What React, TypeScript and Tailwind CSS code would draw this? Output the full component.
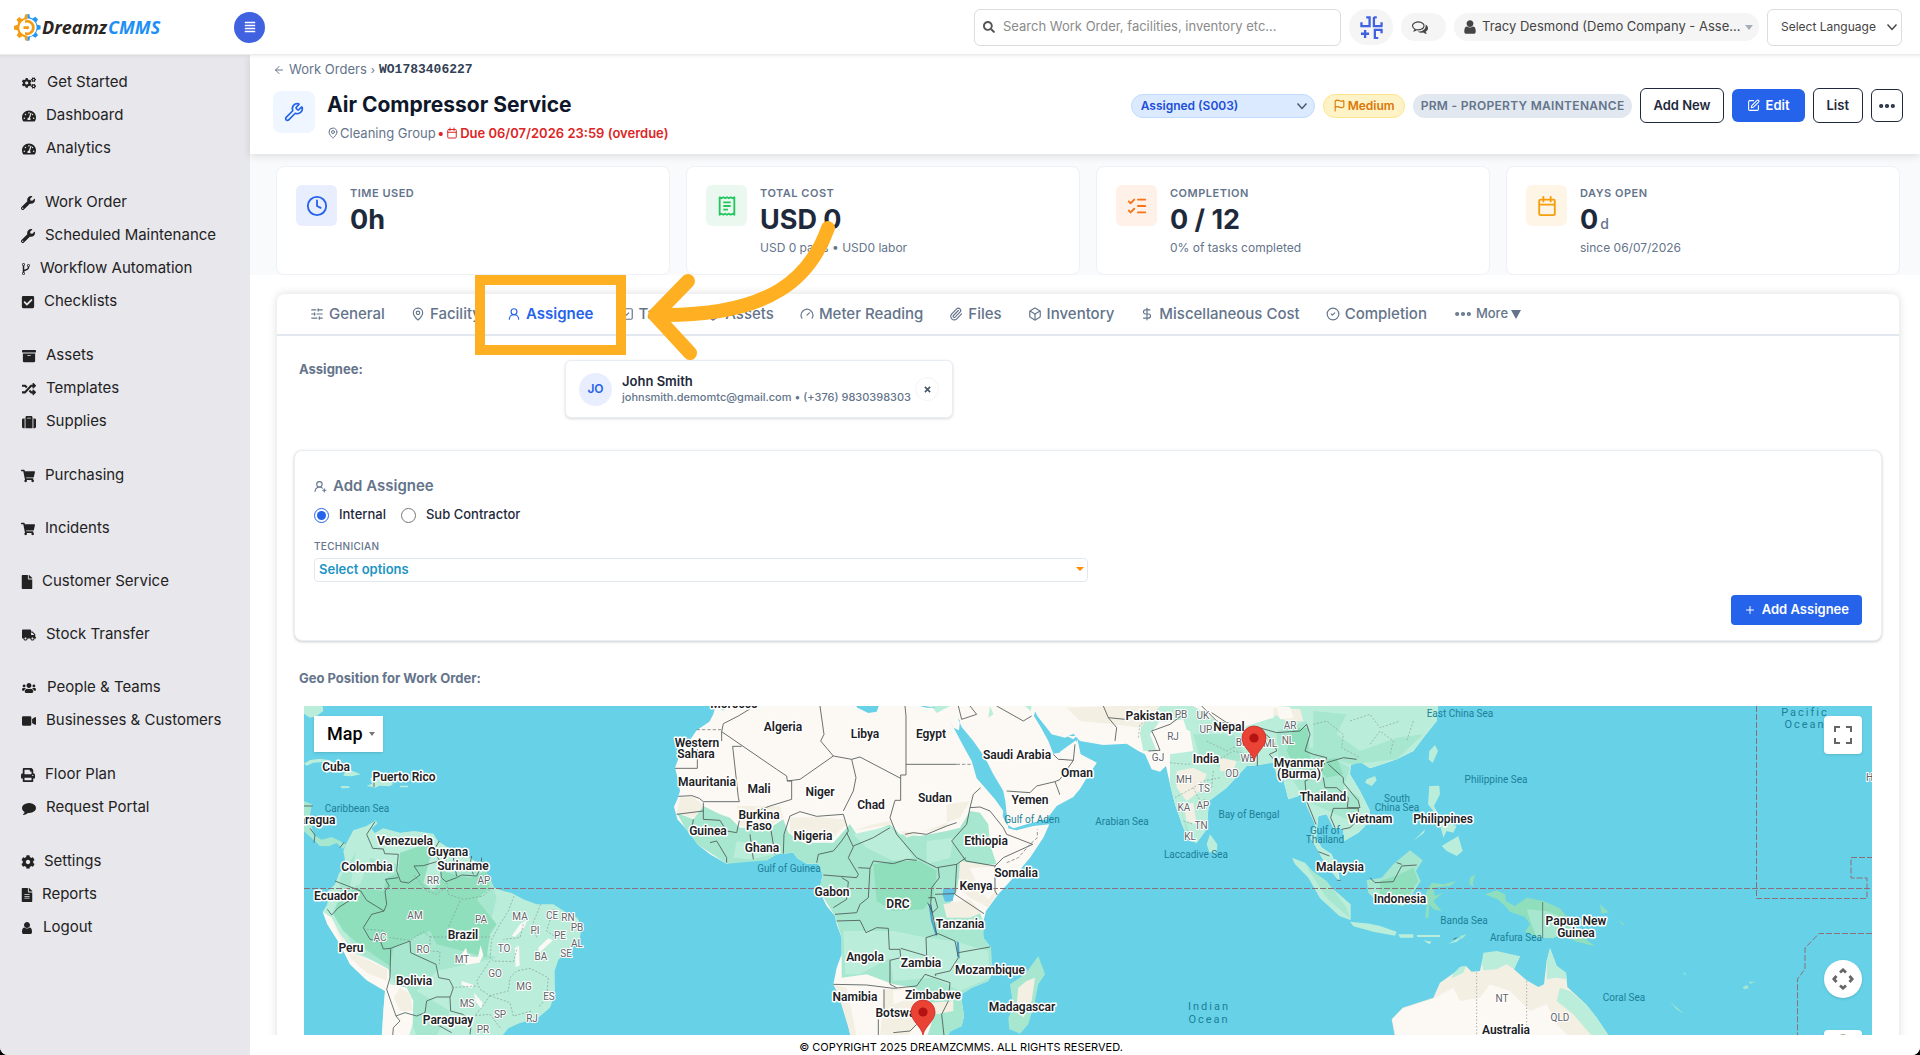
import { useState } from "react";
import type { ComponentType } from "react";
import {
    FaAlignJustify, FaArchive, FaCheckSquare, FaCog, FaCogs, FaFile, FaFileAlt, FaPrint, FaRandom,
    FaSearch, FaShoppingCart, FaSuitcase, FaTachometerAlt, FaTruck, FaUsers, FaVideo, FaWrench,
} from "react-icons/fa";
import {
    ArrowLeft, Box, CircleCheck, Clock, DollarSign, Ellipsis, Flag, Gauge, ListChecks, MapPin,
    Paperclip, Plus, SlidersHorizontal, SquareCheck, SquarePen, UserRound, UserRoundPlus, Wrench,
} from "lucide-react";

/* ---------- glyphs that the icon sets do not carry ---------- */

function Glyph({ d, className }: { d: string; className?: string }) {
    return (
        <svg viewBox="0 0 1792 1792" fill="currentColor" className={className} aria-hidden="true">
            <path d={d} />
        </svg>
    );
}

const userPath =
    "M1536 1399q0 109-62.5 187t-150.5 78h-854q-88 0-150.5-78t-62.5-187q0-85 8.5-160.5t31.5-152 58.5-131 94-89 134.5-34.5q131 128 313 128t313-128q76 0 134.5 34.5t94 89 58.5 131 31.5 152 8.5 160.5zm-256-887q0 159-112.5 271.5t-271.5 112.5-271.5-112.5-112.5-271.5 112.5-271.5 271.5-112.5 271.5 112.5 112.5 271.5z";
const forkPath =
    "M672 1472q0-40-28-68t-68-28-68 28-28 68 28 68 68 28 68-28 28-68zm0-1152q0-40-28-68t-68-28-68 28-28 68 28 68 68 28 68-28 28-68zm640 128q0-40-28-68t-68-28-68 28-28 68 28 68 68 28 68-28 28-68zm96 0q0 52-26 96.5t-70 69.5q-2 287-226 414-67 38-203 81-128 40-169.5 71t-41.5 100v26q44 25 70 69.5t26 96.5q0 80-56 136t-136 56-136-56-56-136q0-52 26-96.5t70-69.5v-820q-44-25-70-69.5t-26-96.5q0-80 56-136t136-56 136 56 56 136q0 52-26 96.5t-70 69.5v497q54-26 154-57 55-17 87.5-29.5t70.5-31 59-39.5 40.5-51 28-69.5 8.5-91.5q-44-25-70-69.5t-26-96.5q0-80 56-136t136-56 136 56 56 136z";
const commentPath =
    "M1792 896q0 174-120 321.5t-326 233-450 85.5q-70 0-145-8-198 175-460 242-49 14-114 22-17 2-30.5-9t-17.5-29v-1q-3-4-.5-12t2-10 4.5-9.5l6-9 7-8.5 8-9q7-8 31-34.5t34.5-38 31-39.5 32.5-51 27-59 26-76q-157-89-247.5-220t-90.5-281q0-130 71-248.5t191-204.5 286-136.5 348-50.5q244 0 450 85.5t326 233 120 321.5z";
const commentsPath =
    "M704 384q-153 0-286 52t-211.5 141-78.5 191q0 82 53 158t149 132l97 56-35 84q34-20 62-39l44-31 53 10q78 14 153 14 153 0 286-52t211.5-141 78.5-191-78.5-191-211.5-141-286-52zm0-128q191 0 353.5 68.5t256.5 186.5 94 257-94 257-256.5 186.5-353.5 68.5q-86 0-176-16-124 88-278 128-36 9-86 16h-3q-11 0-20.5-8t-11.5-21q-1-3-1-6.5t.5-6.5 2-6l2.5-5 3.5-5.5 4-5 4.5-5 4-4.5q5-6 23-25t26-29.5 22.5-29 25-38.5 20.5-44q-124-72-195-177t-71-224q0-139 94-257t256.5-186.5 353.5-68.5zm822 1169q10 24 20.5 44t25 38.5 22.5 29 26 29.5 23 25q1 1 4 4.5t4.5 5 4 5 3.5 5.5l2.5 5 2 6 .5 6.5-1 6.5q-3 14-13 22t-22 7q-50-7-86-16-154-40-278-128-90 16-176 16-271 0-472-132 58 4 88 4 161 0 309-45t264-129q125-92 192-212t67-254q0-77-23-152 129 71 204 178t75 230q0 120-71 224.5t-195 176.5z";

type IconProps = { className?: string };

const UserGlyph = ({ className }: IconProps) => <Glyph d={userPath} className={className} />;
const ForkGlyph = ({ className }: IconProps) => <Glyph d={forkPath} className={className} />;
const CommentGlyph = ({ className }: IconProps) => <Glyph d={commentPath} className={className} />;

function CalendarIcon({ className }: IconProps) {
    return (
        <svg viewBox="0 0 24 24" fill="none" stroke="currentColor" strokeWidth="2" strokeLinecap="round" strokeLinejoin="round" className={className} aria-hidden="true">
            <path d="M5 5h14a1.500 1.500 0 0 1 1.500 1.500v14A1.500 1.500 0 0 1 19 22H5a1.500 1.500 0 0 1-1.500-1.500v-14A1.500 1.500 0 0 1 5 5zM8 2v5M16 2v5M3.500 10.500h17" />
        </svg>
    );
}

function ReceiptIcon({ className }: IconProps) {
    return (
        <svg viewBox="0 0 24 24" fill="none" stroke="currentColor" strokeWidth="2" strokeLinejoin="round" className={className} aria-hidden="true">
            <path d="M4 2.500l2 1 2-1 2 1 2-1 2 1 2-1 2 1 2-1v19l-2-1-2 1-2-1-2 1-2-1-2 1-2-1-2 1zM8 8h8M8 12h8M8 16h5" />
        </svg>
    );
}

function Chevron({ className }: IconProps) {
    return (
        <svg viewBox="0 0 12 12" fill="none" stroke="currentColor" strokeWidth="1.4" className={className} aria-hidden="true">
            <path d="M1.5 3.5 6 8.5l4.5-5" />
        </svg>
    );
}

function Logo() {
    return (
        <a href="#home" className="flex items-center gap-px font-['Open_Sans'] text-lg leading-6 font-bold text-[#2b2623] italic">
            <svg viewBox="0 0 27 27" className="size-[27px]" aria-hidden="true">
                <path d="M13.5 0v5.2a8.3 8.3 0 0 0 0 16.6V27l-2.2-.6-.6-3.2-2.6-1-2.8 1.8-2.6-2.6 1.7-2.8-1-2.4L0 15.4v-3.7l3.3-.7 1-2.5-1.8-2.8 2.6-2.6 2.8 1.8 2.5-1 .7-3.3z" fill="#f39c12" />
                <path d="M13.5 0l1.8.2.7 3.4 2.6 1 2.7-1.8L24 5.4l-1.8 2.8 1 2.5 3.4.7v3.8l-3.3.7-1.1 2.6 1.8 2.7-2.6 2.6-2.8-1.8-2.5 1-.7 3.4-1.9.6v-4.3a9.2 9.2 0 0 0 0-18.4z" fill="#2196f3" />
                <path d="M11 6.2a7.6 7.6 0 1 1 0 14.6v-2.7a5 5 0 1 0 0-9.2z" fill="#f39c12" />
                <path d="M9.5 12.3h3.2a1.6 1.6 0 1 1 0 2.8H9.5z" fill="#f39c12" />
            </svg>
            <span>Dreamz</span>
            <span className="text-[#1e90f5]">CMMS</span>
        </a>
    );
}

/* ---------- top bar ---------- */

function TopBar() {
    return (
        <header className="relative z-20 flex h-[55px] shrink-0 items-center border-b border-[#ececec] bg-white pr-[18px] pl-[14px] shadow-[0_1px_3px_rgba(0,0,0,0.08)]">
            <div className="flex w-[220px] items-center">
                <Logo />
            </div>
            <button type="button" aria-label="Toggle menu" className="flex size-[31px] items-center justify-center rounded-full bg-[#4162e0] text-white">
                <FaAlignJustify className="size-3" />
            </button>

            <div className="ml-auto flex items-center gap-2">
                <label className="flex h-[37px] w-[367px] items-center gap-2 rounded-md border border-[#dcdcdc] px-2">
                    <FaSearch className="size-3 text-[#555]" />
                    <input
                        type="search"
                        aria-label="Search"
                        placeholder="Search Work Order, facilities, inventory etc..."
                        className="min-w-0 flex-1 text-[13px] outline-none placeholder:text-[#8b8b8b]"
                    />
                </label>
                <button type="button" aria-label="Quick actions" className="flex h-9 w-11 items-center justify-center rounded-full bg-[#f5f5f5]">
                    <svg viewBox="0 0 24 24" className="size-[23px]" fill="none" stroke="#4162e0" strokeWidth="2.400" aria-hidden="true">
                        <path d="M1.500 6.500v4H10V1.500H6.500M14.500 1v9.500H23.500M17.500 1.500h-3M22.500 10.500v-4M1 18.500h8.500M5.300 14.500V23M22.500 18v-3.500h-7v8.500H19" />
                    </svg>
                </button>
                <button type="button" aria-label="Messages" className="flex h-7 w-[45px] items-center justify-center rounded-full bg-[#f5f5f5] pr-2 text-[#444]">
                    <Glyph d={commentsPath} className="size-4" />
                </button>
                <button type="button" className="flex h-7 w-[305px] items-center gap-1 rounded-full bg-[#f5f5f5] px-2 text-[13px] whitespace-nowrap text-[#444]">
                    <UserGlyph className="size-4 shrink-0" />
                    Tracy Desmond (Demo Company - Asse...
                    <span className="ml-auto border-x-4 border-t-[5px] border-x-transparent border-t-[#a5adba]" />
                </button>
                <div className="relative">
                    <select aria-label="Select Language" className="h-[37px] w-[135px] appearance-none rounded-md border border-[#dcdcdc] bg-white pl-[13px] text-xs text-[#444]">
                        <option>Select Language</option>
                    </select>
                    <Chevron className="pointer-events-none absolute top-3 right-1 size-3 text-[#444]" />
                </div>
            </div>
        </header>
    );
}

/* ---------- sidebar ---------- */

type Icon = ComponentType<IconProps>;

const menu: { label: string; icon: Icon; size: string }[][] = [
    [
        { label: "Get Started", icon: FaCogs, size: "w-4" },
        { label: "Dashboard", icon: FaTachometerAlt, size: "w-[15px]" },
        { label: "Analytics", icon: FaTachometerAlt, size: "w-[15px]" },
    ],
    [
        { label: "Work Order", icon: FaWrench, size: "w-[14px]" },
        { label: "Scheduled Maintenance", icon: FaWrench, size: "w-[14px]" },
        { label: "Workflow Automation", icon: ForkGlyph, size: "w-[9px]" },
        { label: "Checklists", icon: FaCheckSquare, size: "w-[13px]" },
    ],
    [
        { label: "Assets", icon: FaArchive, size: "w-[15px]" },
        { label: "Templates", icon: FaRandom, size: "w-[15px]" },
        { label: "Supplies", icon: FaSuitcase, size: "w-[15px]" },
    ],
    [{ label: "Purchasing", icon: FaShoppingCart, size: "w-[14px]" }],
    [{ label: "Incidents", icon: FaShoppingCart, size: "w-[14px]" }],
    [{ label: "Customer Service", icon: FaFile, size: "w-[11px]" }],
    [{ label: "Stock Transfer", icon: FaTruck, size: "w-[15px]" }],
    [
        { label: "People & Teams", icon: FaUsers, size: "w-4" },
        { label: "Businesses & Customers", icon: FaVideo, size: "w-[15px]" },
    ],
    [
        { label: "Floor Plan", icon: FaPrint, size: "w-[14px]" },
        { label: "Request Portal", icon: CommentGlyph, size: "w-[15px]" },
    ],
    [
        { label: "Settings", icon: FaCog, size: "w-[13px]" },
        { label: "Reports", icon: FaFileAlt, size: "w-[11px]" },
        { label: "Logout", icon: UserGlyph, size: "w-[12px]" },
    ],
];

function Sidebar() {
    return (
        <nav className="flex w-[250px] shrink-0 flex-col gap-5 overflow-hidden bg-[#e8e7ec] pt-[11px] pl-[21px]">
            {menu.map((group) => (
                <ul key={group[0].label} className={group.length > 1 ? "pb-px" : ""}>
                    {group.map(({ label, icon: ItemIcon, size }) => (
                        <li key={label}>
                            <a href="#menu" className="flex h-[33px] items-center gap-[10px] text-[15px] text-[#222]">
                                <span className={`flex justify-center ${size}`}>
                                    <ItemIcon className="h-[14px] w-auto shrink-0" />
                                </span>
                                {label}
                            </a>
                        </li>
                    ))}
                </ul>
            ))}
        </nav>
    );
}

/* ---------- work order header ---------- */

function OrderHeader() {
    return (
        <section className="relative z-10 flex h-[99px] shrink-0 flex-col bg-white pr-[17px] pl-[23px] shadow-[0_2px_8px_rgba(0,0,0,0.12)]">
            <div className="flex h-[30px] items-center gap-1 text-[13px] text-[#64748b]">
                <a href="#orders" className="flex items-center gap-1">
                    <ArrowLeft className="size-3" />
                    Work Orders
                </a>
                <span className="text-[11px]">›</span>
                <span className="font-['Liberation_Mono'] font-bold text-[#334155]">WO1783406227</span>
            </div>
            <div className="flex items-start">
                <div className="mt-[6px] mr-3 flex size-[42px] items-center justify-center rounded-lg bg-[#eff6ff] text-[#2563eb]">
                    <Wrench className="size-5" />
                </div>
                <div>
                    <h1 className="text-[21px] leading-10 font-bold text-[#0f172a]">Air Compressor Service</h1>
                    <p className="flex items-center gap-px text-[13px] leading-4 text-[#64748b]">
                        <MapPin className="size-3" />
                        Cleaning Group
                        <span className="flex items-center gap-[2px] pl-px font-semibold text-[#dc2626]">
                            • <CalendarIcon className="size-3" />
                            Due 06/07/2026 23:59 (overdue)
                        </span>
                    </p>
                </div>
                <div className="mt-[3px] ml-auto flex items-center gap-2 text-[13px] font-semibold">
                    <div className="relative">
                        <select aria-label="Status" className="block h-6 w-[184px] appearance-none rounded-full border border-[#bfdbfe] bg-[#dbeafe] pl-[9px] text-xs font-semibold text-[#1d4ed8]">
                            <option>Assigned (S003)</option>
                        </select>
                        <Chevron className="pointer-events-none absolute top-[6px] right-[7px] size-3 text-[#475569]" />
                    </div>
                    <span className="flex h-6 items-center gap-[2px] rounded-full border border-[#fde68a] bg-[#fef3c7] px-[9px] text-xs text-[#d97706]">
                        <Flag className="size-[13px]" />
                        Medium
                    </span>
                    <span className="flex h-6 items-center rounded-full bg-[#e2e8f0] px-2 text-xs tracking-[0.3px] text-[#64748b]">
                        PRM - PROPERTY MAINTENANCE
                    </span>
                    <button type="button" className="h-[35px] rounded-md border border-[#1e293b] px-3 text-[#1e293b]">Add New</button>
                    <button type="button" className="flex h-[33px] items-center gap-[6px] rounded-md bg-[#2563eb] px-[15px] text-white">
                        <SquarePen className="size-[13px]" />
                        Edit
                    </button>
                    <button type="button" className="h-[35px] rounded-md border border-[#1e293b] px-[13px] text-[#1e293b]">List</button>
                    <button type="button" aria-label="More actions" className="flex h-[33px] w-8 items-center justify-center rounded-md border border-[#1e293b] text-[#1e293b]">
                        <Ellipsis className="size-5" strokeWidth={3} />
                    </button>
                </div>
            </div>
        </section>
    );
}

/* ---------- stat cards ---------- */

const stats = [
    { label: "TIME USED", value: "0h", note: "", icon: Clock, tone: "bg-[#e8eefd] text-[#2563eb]" },
    { label: "TOTAL COST", value: "USD 0", note: "USD 0 parts • USD0 labor", icon: ReceiptIcon, tone: "bg-[#eaf8ef] text-[#22c55e]" },
    { label: "COMPLETION", value: "0 / 12", note: "0% of tasks completed", icon: ListChecks, tone: "bg-[#fff1e7] text-[#f97316]" },
    { label: "DAYS OPEN", value: "0", unit: "d", note: "since 06/07/2026", icon: CalendarIcon, tone: "bg-[#fef5e6] text-[#f59e0b]" },
];

function Stats() {
    return (
        <section className="grid grid-cols-4 gap-4 bg-[#f8fafc] pt-3 pr-5 pl-[26px]">
            {stats.map(({ label, value, unit, note, icon: StatIcon, tone }) => (
                <div key={label} className="flex h-[109px] gap-[13px] rounded-lg border border-[#eef2f6] bg-white px-[19px] py-[18px]">
                    <div className={`flex size-[41px] shrink-0 items-center justify-center rounded-md ${tone}`}>
                        <StatIcon className="size-[22px]" />
                    </div>
                    <div className="text-xs text-[#64748b]">
                        <div className="text-[11px] leading-4 font-semibold tracking-[0.5px]">{label}</div>
                        <div className="flex items-baseline gap-[2px] text-[27px] leading-[38px] font-bold text-[#1e293b]">
                            {value}
                            {unit && <span className="text-sm font-medium text-[#64748b]">{unit}</span>}
                        </div>
                        <div className="leading-[18px]">{note}</div>
                    </div>
                </div>
            ))}
        </section>
    );
}

/* ---------- tabs ---------- */

const tabs = [
    { label: "General", icon: SlidersHorizontal },
    { label: "Facility", icon: MapPin },
    { label: "Assignee", icon: UserRound },
    { label: "Tasks", icon: SquareCheck },
    { label: "Assets", icon: Box },
    { label: "Meter Reading", icon: Gauge },
    { label: "Files", icon: Paperclip },
    { label: "Inventory", icon: Box },
    { label: "Miscellaneous Cost", icon: DollarSign },
    { label: "Completion", icon: CircleCheck },
];

function Callout() {
    return (
        <span className="pointer-events-none absolute -top-7 -left-8 z-30 block h-20 w-[151px] border-[10px] border-[#ffb022]">
            <svg viewBox="0 0 200 160" fill="none" stroke="#ffb022" strokeWidth="14" strokeLinecap="round" strokeLinejoin="round" className="absolute -top-[75px] left-[150px] h-40 w-[200px] max-w-none" aria-hidden="true">
                <path d="M193 18C176 66 138 106 26 105" />
                <path d="M53 71 20 105l35 38" />
            </svg>
        </span>
    );
}

function Tabs() {
    const [active, setActive] = useState("Assignee");
    return (
        <div role="tablist" className="flex h-[42px] items-center gap-[26px] border-b-2 border-[#e2e8f0] pl-[33px] text-[15px] font-medium text-[#64748b]">
            {tabs.map(({ label, icon: TabIcon }) => (
                <button
                    key={label}
                    type="button"
                    role="tab"
                    aria-selected={active === label}
                    onClick={() => setActive(label)}
                    className={`relative flex items-center gap-[5px] whitespace-nowrap ${active === label ? "font-semibold text-[#2563eb]" : ""}`}
                >
                    <TabIcon className="size-[14px]" />
                    {label}
                    {label === "Assignee" && <Callout />}
                </button>
            ))}
            <button type="button" className="flex items-center gap-[3px] text-[13px]">
                <Ellipsis className="size-5" strokeWidth={3} />
                More
                <span className="border-x-[5px] border-t-[9px] border-x-transparent border-t-[#64748b]" />
            </button>
        </div>
    );
}

/* ---------- map ---------- */

type Mark = [string, number, number];

const countries: Mark[] = [
    ["Cuba", 32, 61], ["Puerto Rico", 100, 71], ["Nicaragua", 4, 114], ["Venezuela", 101, 135], ["Guyana", 144, 146],
    ["Suriname", 159, 160], ["Colombia", 63, 161], ["Ecuador", 32, 190], ["Peru", 47, 242], ["Brazil", 159, 229],
    ["Bolivia", 110, 275], ["Paraguay", 144, 314], ["Morocco", 430, -2], ["Algeria", 479, 21], ["Libya", 561, 28],
    ["Egypt", 627, 28], ["Saudi Arabia", 713, 49], ["Western", 393, 37], ["Sahara", 392, 48], ["Mauritania", 403, 76],
    ["Mali", 455, 83], ["Niger", 516, 86], ["Chad", 567, 99], ["Sudan", 631, 92], ["Yemen", 726, 94],
    ["Oman", 773, 67], ["Burkina", 455, 109], ["Faso", 455, 120], ["Guinea", 404, 125], ["Ghana", 458, 142],
    ["Nigeria", 509, 130], ["Ethiopia", 682, 135], ["Somalia", 712, 167], ["Kenya", 672, 180], ["Gabon", 528, 186],
    ["DRC", 594, 198], ["Tanzania", 656, 218], ["Angola", 561, 251], ["Zambia", 617, 257], ["Mozambique", 686, 264],
    ["Zimbabwe", 629, 289], ["Namibia", 551, 291], ["Botswana", 598, 307], ["Madagascar", 718, 301],
    ["Pakistan", 845, 10], ["Nepal", 925, 21], ["India", 902, 53], ["Myanmar", 995, 57], ["(Burma)", 995, 68],
    ["Thailand", 1019, 91], ["Vietnam", 1066, 113], ["Philippines", 1139, 113], ["Malaysia", 1036, 161],
    ["Indonesia", 1096, 193], ["Papua New", 1272, 215], ["Guinea", 1272, 227], ["Australia", 1202, 324],
];

const states: Mark[] = [
    ["RR", 129, 174], ["AP", 180, 174], ["AM", 111, 209], ["PA", 177, 213], ["MA", 216, 210], ["CE", 248, 209],
    ["RN", 264, 211], ["PB", 273, 221], ["PE", 256, 229], ["PI", 231, 224], ["AL", 273, 237], ["SE", 262, 247],
    ["BA", 237, 250], ["TO", 200, 242], ["AC", 76, 231], ["RO", 119, 243], ["MT", 158, 253], ["GO", 191, 267],
    ["MG", 220, 280], ["ES", 245, 290], ["MS", 163, 297], ["SP", 196, 308], ["RJ", 228, 312], ["PR", 179, 323],
    ["PB", 877, 8], ["UK", 899, 9], ["AR", 986, 19], ["RJ", 869, 30], ["UP", 902, 23], ["NL", 984, 34],
    ["ML", 966, 37], ["BR", 938, 36], ["WB", 944, 52], ["GJ", 854, 51], ["OD", 928, 67], ["MH", 880, 73],
    ["TS", 900, 82], ["KA", 880, 101], ["AP", 899, 99], ["TN", 897, 119], ["KL", 886, 130], ["NT", 1198, 292],
    ["QLD", 1256, 311], ["HI", 1567, 71],
];

const seas: Mark[] = [
    ["Caribbean Sea", 53, 102], ["Gulf of Guinea", 485, 162], ["Gulf of Aden", 728, 113], ["East China Sea", 1156, 7],
    ["Arabian Sea", 818, 115], ["Bay of Bengal", 945, 108], ["South", 1093, 92], ["China Sea", 1093, 101],
    ["Gulf of", 1021, 124], ["Thailand", 1021, 133], ["Laccadive Sea", 892, 148], ["Banda Sea", 1160, 214],
    ["Philippine Sea", 1192, 73], ["Arafura Sea", 1212, 231], ["Coral Sea", 1320, 291],
];

const oceans: Mark[] = [["Indian", 905, 300], ["Ocean", 905, 313], ["Pacific", 1501, 6], ["Ocean", 1501, 18]];

function Labels({ items, className }: { items: Mark[]; className: string }) {
    return (
        <g className={className} textAnchor="middle" dominantBaseline="central" paintOrder="stroke" strokeLinejoin="round">
            {items.map(([text, x, y]) => (
                <text key={`${text}${x}`} x={x} y={y}>{text}</text>
            ))}
        </g>
    );
}

function Pin({ x, y }: { x: number; y: number }) {
    return (
        <g transform={`translate(${x} ${y})`}>
            <path d="M0 0C-2-9-12-14-12-23a12 12 0 0 1 24 0C12-14 2-9 0 0z" fill="#ea4335" stroke="#c5221f" strokeWidth="0.7" />
            <circle cy="-23" r="4.600" fill="#b31412" />
        </g>
    );
}

const cream = "#fcf9f5";
const sand = "#f4efe3";
const mint = "#bbeddb";
const green = "#a7e7cf";
const deep = "#8fdfbd";
const water = "#66d1e7";

/* each group below is drawn on its own sheet at three units to the pixel */
function WorldMap() {
    return (
        <svg viewBox="0 0 1568 329" preserveAspectRatio="xMidYMin slice" className="block h-[329px] w-full" aria-label="World map">
            <rect width="1568" height="329" fill={water} />

            {/* the Americas */}
            <g transform="translate(-14 -15) scale(0.33333)">
                <path fill={mint} d="M30 40H97L100 60 80 75 60 80 30 60z" />
                <path fill={mint} d="M42 218 60 207 90 203 120 208 150 228 175 235 212 250 185 256 160 254 165 243 130 228 100 213 70 215 50 224zM240 262 258 257 285 266 310 278 300 286 268 284 256 290 230 284 246 278zM152 285l25 1 2 5-24 1zM330 284h24v5h-24z" />
                <path fill={green} d="M30 325 66 340 60 370 66 410 72 432 95 446 125 438 150 450 170 462 158 474 140 456 116 466 90 465 72 448 50 428 30 410z" />
                <path fill={mint} d="M170 455 190 418 230 405 258 388 262 398 244 412 254 426 280 412 330 425 372 420 400 424 430 428 444 450 490 480 540 500 580 530 600 560 612 590 640 600 665 606 700 625 740 640 790 640 830 665 862 680 875 705 870 740 832 782 805 806 794 840 795 910 780 950 740 984 690 996 655 1012 632 1040H275L280 960 285 900 230 868 180 820 150 760 112 700 98 662 112 640 114 600 135 580 148 545 168 524 160 480z" />
                <path fill={green} d="M150 560 200 480 240 500 320 520 420 500 560 520 600 560 620 620 600 700 520 760 620 800 440 840 380 900 480 960 440 1033H380L300 840 200 780 130 660 150 610z" />
                <path fill={deep} d="M330 485 420 455 450 500 450 540 540 560 590 540 600 590 560 625 620 700 600 730 590 800 520 780 440 760 420 720 360 745 310 770 300 825 220 770 160 720 130 670 150 620 200 590 280 600 290 560 325 545z" />
                <path fill={mint} d="M420 500 450 490 455 560 430 600 400 575zM200 470 250 480 210 580 180 590z" />
                <path fill={cream} d="M98 662 125 680 150 730 200 790 250 810 296 835 300 880 350 890 370 930 368 1000 355 1040H275L280 960 285 900 230 868 180 820 150 760 112 700z" />
                <path fill={sand} d="M125 690 150 730 190 785 250 815 292 835 290 870 230 845 180 800zM330 890 362 910 368 960 330 960 312 920z" />
                <path fill={cream} d="M508 800l20-30 6 26 30 2 8-35 8 30-12 22-40 6zM675 770l12-6 2 60-12 4zM745 770l30-28 14 6-22 20-20 18zM690 700l22-14-8 22-30 30-8-4zM552 905l26 30-4 20-18-26zM515 870l36 12-6 10-30-10z" />
                <path fill="none" stroke="#4b5d5a" strokeWidth="2.500" d="M255 392 230 430 248 472 280 474 284 488 325 490 320 540 332 572 356 576 390 552 372 525 400 524 440 512 470 505M448 450 430 480 450 510 454 560 468 572 500 560 515 552 560 555 572 530 575 500M490 500 500 556M545 495 540 520 550 550M325 560 286 565 298 585 285 600 290 640 282 660 230 628 212 600 135 570M282 660 245 670 220 710 240 745 272 752 280 774 302 772 360 750 362 785 438 820 446 860 478 866 490 890 480 920 482 960 518 970M302 772 300 860 290 895 318 975 345 965 380 975 405 965 410 930 440 918 480 918M318 975 330 990 310 1010 308 1035M112 655 125 672 145 650 200 615M42 345h26M60 412 75 432 72 455M150 470l12-16M252 258v30M518 970 545 990 540 1030M440 1000 485 1025" />
                <path fill="none" stroke="#7e9c95" strokeWidth="2" strokeDasharray="6 5" d="M372 552 410 600 440 610 465 590M470 575 475 610 520 625 580 615 605 590M510 630 475 710 490 735M420 738H600M672 615 655 660 630 700 605 745 600 800 610 810 670 812 682 770M752 640 728 700 740 740M790 655 770 720 800 740M230 715 280 718 300 740 360 748 400 722 420 738V780L450 782 448 820M600 810 560 870 570 895 600 914 655 900 660 860 680 840 720 832 775 860 770 920 745 950M600 914 575 950 545 985M600 914 660 935 670 975 725 960M485 890 560 885M545 975 600 970 630 1010M700 700 690 740 640 745" />
            </g>

            {/* Africa and Arabia */}
            <g transform="translate(356 -15) scale(0.33333)">
                <path fill={cream} d="M168 40 160 70 148 92 110 118 88 150 62 185 45 230 55 270 60 300 52 325 42 347 52 385 75 410 100 440 112 460 150 490 200 518 225 510 270 505 320 508 350 490 400 485 412 502 440 518 475 518 488 550 478 600 500 645 525 675 530 700 545 740 545 790 530 830 520 880 535 910 560 980 572 1040H858L872 1020 905 1005 912 975 905 930 900 912 935 890 985 870 995 850 993 770 970 740 968 700 978 660 1015 610 1060 560 1110 500 1150 440 1168 400 1120 405 1070 418 1045 412 1060 412 1100 400 1160 385 1190 345 1240 318 1262 290 1280 260 1310 215 1262 190 1252 145 1242 180 1215 182 1180 188 1165 150 1142 108 1122 75 1130 40z" />
                <path fill={green} d="M50 365 100 385 130 345 180 370 210 380 240 410 330 410 370 385 385 425 430 455 520 455 570 400 590 430 640 420 690 400 720 430 780 435 860 420 900 410 930 360 960 365 985 400 990 460 1010 520 930 525 905 510 890 600 870 640 900 650 960 665 972 700 970 740 993 770 995 850 985 870 935 890 900 912 905 930 912 975 905 1005 872 1020 858 1040H800L820 980 760 890 700 880 620 850 545 860 545 790 545 740 525 675 478 600 488 550 475 518 440 518 412 502 400 485 350 490 320 508 200 518 112 460 75 410z" />
                <path fill={mint} d="M230 450 330 470 350 490 270 505 220 500zM580 430 690 405 720 440 760 500 700 510 620 470zM800 450 880 440 870 500 800 520zM700 720 800 740 880 750 985 780 990 860 900 900 860 880 820 860 700 870 690 800 600 850 555 850 550 720 620 720z" />
                <path fill={deep} d="M640 520 700 510 780 510 830 540 820 620 790 655 700 660 650 630z" />
                <path fill={sand} d="M60 320 100 318 130 345 100 380 50 365zM230 345 360 345 370 380 320 410 240 405zM390 380 470 378 550 385 560 400 500 455 440 440 390 425zM575 420 640 400 690 390 720 420 780 425 860 410 860 340 930 330 900 380 740 440 700 400zM850 640 930 625 965 665 930 680 860 680zM900 510 1000 525 1010 610 985 650 930 620 895 590zM672 895 760 890 800 960 740 1040H660zM520 880 560 890 590 1033H572L535 910zM810 935 880 930 880 960 830 970z" />
                <path fill={cream} d="M930 530 1000 528 1015 590 985 625 960 600zM700 900 740 895 730 930 700 940z" />
                <path fill={mint} d="M810 40 880 40 830 66zM165 45 200 45 190 60zM990 45 1000 70 985 80zM1095 45h20l-3 15z" />
                <path fill={water} d="M585 40 592 50 625 66 650 62 658 40zM758 40 830 50 800 50zM862 78 880 110 897 118 900 90 893 80 905 108 940 150 975 200 1000 250 1030 300 1036 330 1040 370 1045 412 1070 418 1040 400 1028 375 1030 360 1005 325 975 290 950 262 935 210 910 165 885 118z" />
                <path fill="#63c3e6" d="M850 592 885 590 882 610 878 630 855 632 848 612z" />
                <path fill="#4ba5cb" d="M806 640h8l5 50 14 42-6 2-14-44zM890 750l7 5 2 48-7-8z" />
                <path fill={green} d="M1135 795 1148 830 1155 850 1135 880 1125 930 1105 1000 1080 1028 1048 1015 1045 980 1060 950 1050 880 1095 850z" />
                <path fill={sand} d="M1100 870 1125 860 1115 930 1090 980 1070 940 1075 890z" />
                <path fill="none" stroke="#4d5553" strokeWidth="2.500" d="M268 55 235 75 190 98 185 122 350 235 380 255 382 270 420 265 520 195 575 205 600 198 722 262M480 45 492 130 482 150 520 195M735 45 738 75V252H722V328H705L690 380 710 430 770 500 830 530 890 520 918 500M738 220H890M382 270H395V325L330 345 240 380M185 122V150M245 166H218L235 320 238 332H130L118 322 96 314 55 316M112 175V232H45M130 335 130 385 180 388 200 420 230 425 240 380M50 370 130 360M100 385 95 420M150 455 170 450 200 500V515M270 430 280 505M330 400 345 490M370 488 372 430 390 375 420 362 470 376 550 370 565 420 545 450 520 480 475 490 470 515M575 205 588 260 580 300 550 360M560 425 580 468 565 500 595 550 590 560 490 552M690 410 640 440 580 465M595 530 630 532 640 510 700 518 740 505 770 508M630 532 625 620 600 640 590 665 525 670M545 560 565 572 560 625 520 650M530 690 600 688 618 725 650 710 685 712 688 775 720 775 722 800 690 808 690 880 710 890M520 880 620 882 700 892 770 885 795 850 870 875 865 930 845 970 852 1033M722 772 800 795 798 740 835 728 885 750 895 800 870 840 825 850 828 855M835 530 838 560 815 590 812 640 830 730M825 610 885 608 890 520M885 610 972 668M895 785 990 768M930 350 920 400 875 450 918 510 1005 525 1030 500 1118 460 1040 430 1030 410 990 360 960 348 930 350 940 310 962 290M1005 525V600L1012 612M735 430 760 425 800 430 860 405 890 395M655 985V1033M672 895V955M700 1025 750 1020 770 1000M805 620l20 0 8 30-15 15-15-30M895 45 905 85 950 70 930 45M1010 45 1090 90 1115 75M1040 300 1110 305 1130 285 1185 272 1260 240M1185 272 1200 312M1180 190 1195 205 1240 208 1245 175" />
                <path fill="none" stroke="#7a8280" strokeWidth="2.500" strokeDasharray="10 6" d="M110 116H185M890 220H935M1040 515 1075 500 1110 460 1132 440V415" />
            </g>

            {/* Asia and the islands */}
            <g transform="translate(756 -15) scale(0.33333)">
                <path fill={cream} d="M-85 40-68 75-25 130 15 140 40 128 60 150 130 162 200 158 235 180 255 190 275 235 300 242 318 225 330 280 345 340 370 410 390 450 410 455 440 415 447 330 500 290 560 225 600 222 625 205 640 215 650 250 670 265 685 325 715 315 735 300 738 340 765 400 752 440 775 480 800 525 840 572 835 545 815 490 785 470 768 440 775 375 800 370 820 410 850 415 852 450 895 425 920 400 930 360 900 300 870 250 872 222 900 212 930 232 1010 205 1060 180 1090 140 1130 90 1135 40z" />
                <path fill={mint} d="M245 100 300 45H400L470 90 560 105 640 80 660 40H1135L1130 90 1090 140 1060 180 1010 205 930 232 900 212 872 222 870 250 900 300 930 360 920 400 895 425 852 450 850 415 820 410 800 370 775 375 768 440 785 470 815 490 840 572 800 525 775 480 752 440 765 400 738 340 735 300 715 315 685 325 670 265 650 250 640 215 600 222 560 225 500 290 447 330 440 415 410 455 390 450 370 410 345 340 330 280 330 190 400 180 390 120 300 90 270 130 290 180 250 180 240 130z" />
                <path fill={green} d="M400 130 520 130 560 200 480 230 420 200zM650 120 740 90 750 170 800 190 870 230 850 290 900 320 890 400 850 380 740 330 700 270 660 260zM760 60 860 70 830 130 900 180 1010 140 1090 130 1010 205 870 220 760 180zM360 340 380 430 395 440 370 380z" />
                <path fill={deep} d="M700 110 745 110 745 180 770 250 735 270 700 220 680 180zM750 210 830 200 850 250 800 260z" />
                <path fill={sand} d="M160 45H300L240 110 160 100 60 90 20 50zM350 240 400 230 440 250 420 300 380 330 350 290zM370 340 400 335 410 400 380 390zM480 200 530 210 520 240 480 240zM640 50 720 55 730 90 680 90 640 70z" />
                <path fill={cream} d="M300 95 370 85 390 150 350 185 300 160zM650 45 690 48 700 80 660 85zM20 135h30l-10 10zM0 182 48 148 60 190 110 215 80 260 55 300 0 314z" />
                <path fill={mint} d="M450 430 472 460 470 485 448 484 440 460zM1125 162 1134 180 1118 216 1106 205 1108 180zM920 265 945 255 950 268 935 285 915 275zM1108 285 1138 284 1140 310 1122 345 1140 380 1128 370 1104 340zM1140 400 1160 395 1190 405 1180 425 1160 420 1150 440zM1145 465 1195 435 1208 480 1190 495 1160 480zM1095 415 1060 450 1092 425z" />
                <path fill={mint} d="M696 500 735 515 770 555 815 590 872 640 872 688 838 675 780 622 745 560 705 520zM870 692 930 698 960 705 1010 722 1005 734 940 722 880 706zM1015 730h45v10h-40zM1070 732h70v6h-68zM1090 748 1115 752 1108 760zM1165 758 1215 732 1190 752z" />
                <path fill={green} d="M740 528 800 570 860 650 868 680 800 620zM920 568 965 560 1000 520 1050 478 1088 508 1068 540 1082 570 1050 620 1030 645 950 630 925 605z" />
                <path fill={deep} d="M960 570 1020 550 1060 530 1075 570 1040 620 960 610zM1098 605 1115 575 1150 580 1190 570 1170 585 1120 590 1125 615 1150 605 1120 630 1145 660 1120 655 1108 640 1105 682 1096 680 1100 640zM1230 560 1245 550 1238 580 1245 590 1228 580z" />
                <path fill="none" stroke="#4d5553" strokeWidth="2.500" d="M130 45 145 80 170 110 165 150M145 80 195 85M265 180 300 178 285 140 275 120 330 100 370 70M425 45 470 90 540 110 560 130M455 65 500 95 540 100M590 108 650 125 720 120 740 100 750 130 735 180 760 190 800 200 780 250 735 270 740 330 768 400M0 205 40 208 45 160M40 208 0 265M562 130 620 132 640 150M592 190V225M640 150 650 180 628 190 655 220M800 215 850 200 890 205M805 220 850 260 850 275 895 330 900 350 862 350 865 320 830 290 795 290 790 260M820 352H895V385L870 410 845 415M820 352 812 380 825 410M775 482 808 495M832 568h10M930 560 945 575 1000 572 1025 525 1070 522M1010 515 1025 520M1180 745 1190 740" />
                <path fill="none" stroke="#8a9e99" strokeWidth="2" strokeDasharray="6 5" d="M235 140 240 100 300 70M330 215 380 220 470 210 520 180 560 190M345 320 400 290 430 270 480 260M400 290 420 330 440 325M370 390 400 400M440 150 500 180 540 160M760 100 800 90 850 130 845 170 900 200M870 90 930 70 960 110 1020 90M930 160 960 120 1000 150 990 190M1060 90 1040 150M460 240 455 290" />
            </g>

            {/* Oceania */}
            <g transform="translate(1156 -15) scale(0.33333)">
                <path fill={deep} d="M75 610 110 598 135 610 138 630 165 645 200 620 250 630 300 652 330 690 345 720 405 766 350 752 315 735 240 740 195 722 210 700 195 678 150 662 135 645 115 626zM420 640 446 664 425 668zM475 685l20 18-8-2zM510 705l15 14M545 728l15 14M575 745l18 22z" />
                <path fill={green} d="M200 655 260 660 310 680 320 720 280 742 230 740 215 700zM630 932 672 968 650 955zM848 888 862 882 866 892 852 895zM866 872h20l-16 6zM670 842l8 8-4 2zM0 735 20 730 5 745z" />
                <path fill={sand} d="M-195 1040-205 985-172 950-80 920-60 875-10 840 0 828 18 825 35 842 60 840 65 815 110 790 180 796 162 835 200 868 235 888 252 880 260 810 270 772 290 825 318 845 322 888 378 940 410 980 450 1040z" />
                <path fill={cream} d="M-190 1040-203 985-172 953-80 923-20 890 0 930 60 920 90 880 150 900 210 960 260 940 290 1000 330 1040z" />
                <path fill={mint} d="M65 815 70 785 110 780 180 796 162 835 140 820 110 835 70 838zM260 810 270 772 290 825 318 845 320 865 290 860 260 865zM330 900 380 942 410 980 450 1040H400L340 970 290 930 300 890zM-20 848 0 828 18 825 10 845-25 862z" />
                <path fill="none" stroke="#5d6d68" strokeWidth="2.500" d="M248 633V742" />
                <path fill="none" stroke="#aaa" strokeWidth="3" strokeDasharray="4 6" d="M50 845V1035M200 870V1035" />
            </g>

            <path fill="none" stroke="#8b6f78" strokeWidth="1" strokeDasharray="6 2" d="M0 182.500H1568M1452.500 0V192.500H1563V172H1547V151.500H1568M1568 227.500H1515L1501 242V263L1493.500 273V329" />

            <Labels items={seas} className="fill-[#1d7f97] font-['Roboto'] text-[10px]" />
            <Labels items={oceans} className="fill-[#1d7f97] font-['Roboto'] text-[11px] tracking-[2px]" />
            <Labels items={states} className="fill-[#5f6368] stroke-white stroke-2 font-['Roboto'] text-[10px]" />
            <Labels items={countries} className="fill-[#202124] stroke-white stroke-3 font-['Roboto'] text-[12px] font-semibold" />

            <Pin x={950} y={55} />
            <Pin x={619} y={329} />
        </svg>
    );
}

function MapPanel() {
    return (
        <div className="relative mx-[27px] mt-[18px] h-[420px] overflow-hidden bg-[#66d1e7]">
            <WorldMap />
            <button type="button" className="absolute top-[10px] left-[10px] flex h-9 w-[69px] items-center gap-[6px] bg-white pl-[13px] font-['Roboto'] text-lg font-medium text-black shadow">
                Map
                <span className="border-x-[3px] border-t-[4px] border-x-transparent border-t-[#777]" />
            </button>
            <button type="button" aria-label="Toggle fullscreen" className="absolute top-[10px] right-[10px] flex size-[38px] items-center justify-center rounded-sm bg-white shadow">
                <svg viewBox="0 0 18 18" fill="none" stroke="#666" strokeWidth="2" className="size-[18px]" aria-hidden="true">
                    <path d="M1 6V1h5M12 1h5v5M17 12v5h-5M6 17H1v-5" />
                </svg>
            </button>
            <button type="button" aria-label="Map camera controls" className="absolute top-[254px] right-[10px] flex size-[38px] items-center justify-center rounded-full bg-white shadow">
                <svg viewBox="0 0 22 22" fill="none" stroke="#666" strokeWidth="2.800" className="size-[22px]" aria-hidden="true">
                    <path d="M8 4.500 11 1.800l3 2.700M8 17.500l3 2.700 3-2.700M4.500 8l-2.700 3 2.700 3M17.500 8l2.700 3-2.700 3" />
                </svg>
            </button>
            <button type="button" aria-label="Street View" className="absolute top-[324px] right-[10px] flex size-[38px] justify-center rounded-sm bg-white pt-1 shadow">
                <span className="size-2 rounded-full bg-[#b7ab93]" />
            </button>
        </div>
    );
}

/* ---------- assignee tab ---------- */

function AssigneeCard() {
    return (
        <div className="flex h-[58px] w-[388px] items-center rounded-md border border-[#e9eef4] bg-white px-[13px] shadow-[0_1px_3px_rgba(0,0,0,0.15)]">
            <span className="flex size-[33px] items-center justify-center rounded-full bg-[#e8eefe] text-xs font-semibold text-[#2563eb]">JO</span>
            <div className="ml-[10px] whitespace-nowrap">
                <div className="text-[13px] leading-4 font-semibold text-[#1e293b]">John Smith</div>
                <div className="text-[11px] leading-4 font-medium text-[#64748b]">johnsmith.demomtc@gmail.com • (+376) 9830398303</div>
            </div>
            <button type="button" aria-label="Remove assignee" className="ml-auto flex size-6 items-center justify-center rounded-full border border-[#f1f5f9] text-[#475569]">
                <svg viewBox="0 0 8 8" fill="none" stroke="currentColor" strokeWidth="1.800" className="size-[7px]" aria-hidden="true">
                    <path d="M1 1l6 6M7 1 1 7" />
                </svg>
            </button>
        </div>
    );
}

function AddAssignee() {
    const [source, setSource] = useState("Internal");
    return (
        <form className="mx-[17px] mt-8 flex h-[191px] flex-col rounded-lg border border-[#e9eef4] bg-white px-[19px] pt-[23px] pb-[15px] shadow-[0_1px_3px_rgba(0,0,0,0.2)]">
            <h2 className="flex items-center gap-[6px] text-[15px] leading-6 font-semibold text-[#64748b]">
                <UserRoundPlus className="size-[13px]" />
                Add Assignee
            </h2>
            <div className="mt-[5px] flex h-6 items-center gap-[15px] text-[13px] font-medium text-[#1e293b]">
                {["Internal", "Sub Contractor"].map((option) => (
                    <label key={option} className="flex items-center gap-[10px]">
                        <input
                            type="radio"
                            name="source"
                            checked={source === option}
                            onChange={() => setSource(option)}
                            className="size-[15px] accent-[#2563eb]"
                        />
                        {option}
                    </label>
                ))}
            </div>
            <label htmlFor="technician" className="mt-[11px] text-[10px] leading-4 font-medium tracking-[0.3px] text-[#64748b]">TECHNICIAN</label>
            <div className="relative mt-1 w-1/2">
                <select id="technician" className="block h-6 w-full appearance-none rounded border border-[#e2e8f0] bg-white pl-1 text-[13px] font-semibold text-[#1c94c4]">
                    <option>Select options</option>
                </select>
                <span className="pointer-events-none absolute top-[9px] right-1 border-x-4 border-t-4 border-x-transparent border-t-[#ff8c00]" />
            </div>
            <button type="button" className="mt-auto flex h-[30px] items-center gap-[6px] self-end rounded bg-[#2563eb] px-[13px] text-[13px] font-semibold text-white">
                <Plus className="size-3" />
                Add Assignee
            </button>
        </form>
    );
}

export default function App() {
    return (
        <div className="h-screen bg-black">
            <div className="flex h-full flex-col overflow-hidden rounded-b-lg bg-white font-['Inter']">
                <TopBar />
                <div className="flex min-h-0 flex-1">
                    <Sidebar />
                    <main className="flex min-w-0 flex-1 flex-col">
                        <OrderHeader />
                        <div className="min-h-0 flex-1 overflow-hidden">
                            <Stats />
                            <section className="mt-[19px] mr-[21px] ml-[27px] rounded-t-lg bg-white shadow-[0_0_10px_rgba(0,0,0,0.14)]">
                                <Tabs />
                                <div className="flex pt-6 pl-[22px]">
                                    <span className="w-[266px] text-[13px] font-bold text-[#64748b]">Assignee:</span>
                                    <AssigneeCard />
                                </div>
                                <AddAssignee />
                                <h2 className="mt-[27px] pl-[22px] text-[13px] leading-5 font-bold text-[#64748b]">Geo Position for Work Order:</h2>
                                <MapPanel />
                            </section>
                        </div>
                        <footer className="flex h-5 shrink-0 items-center justify-center bg-white pt-1 pr-[248px] text-[11px] text-black">
                            © COPYRIGHT 2025 DREAMZCMMS. ALL RIGHTS RESERVED.
                        </footer>
                    </main>
                </div>
            </div>
        </div>
    );
}
